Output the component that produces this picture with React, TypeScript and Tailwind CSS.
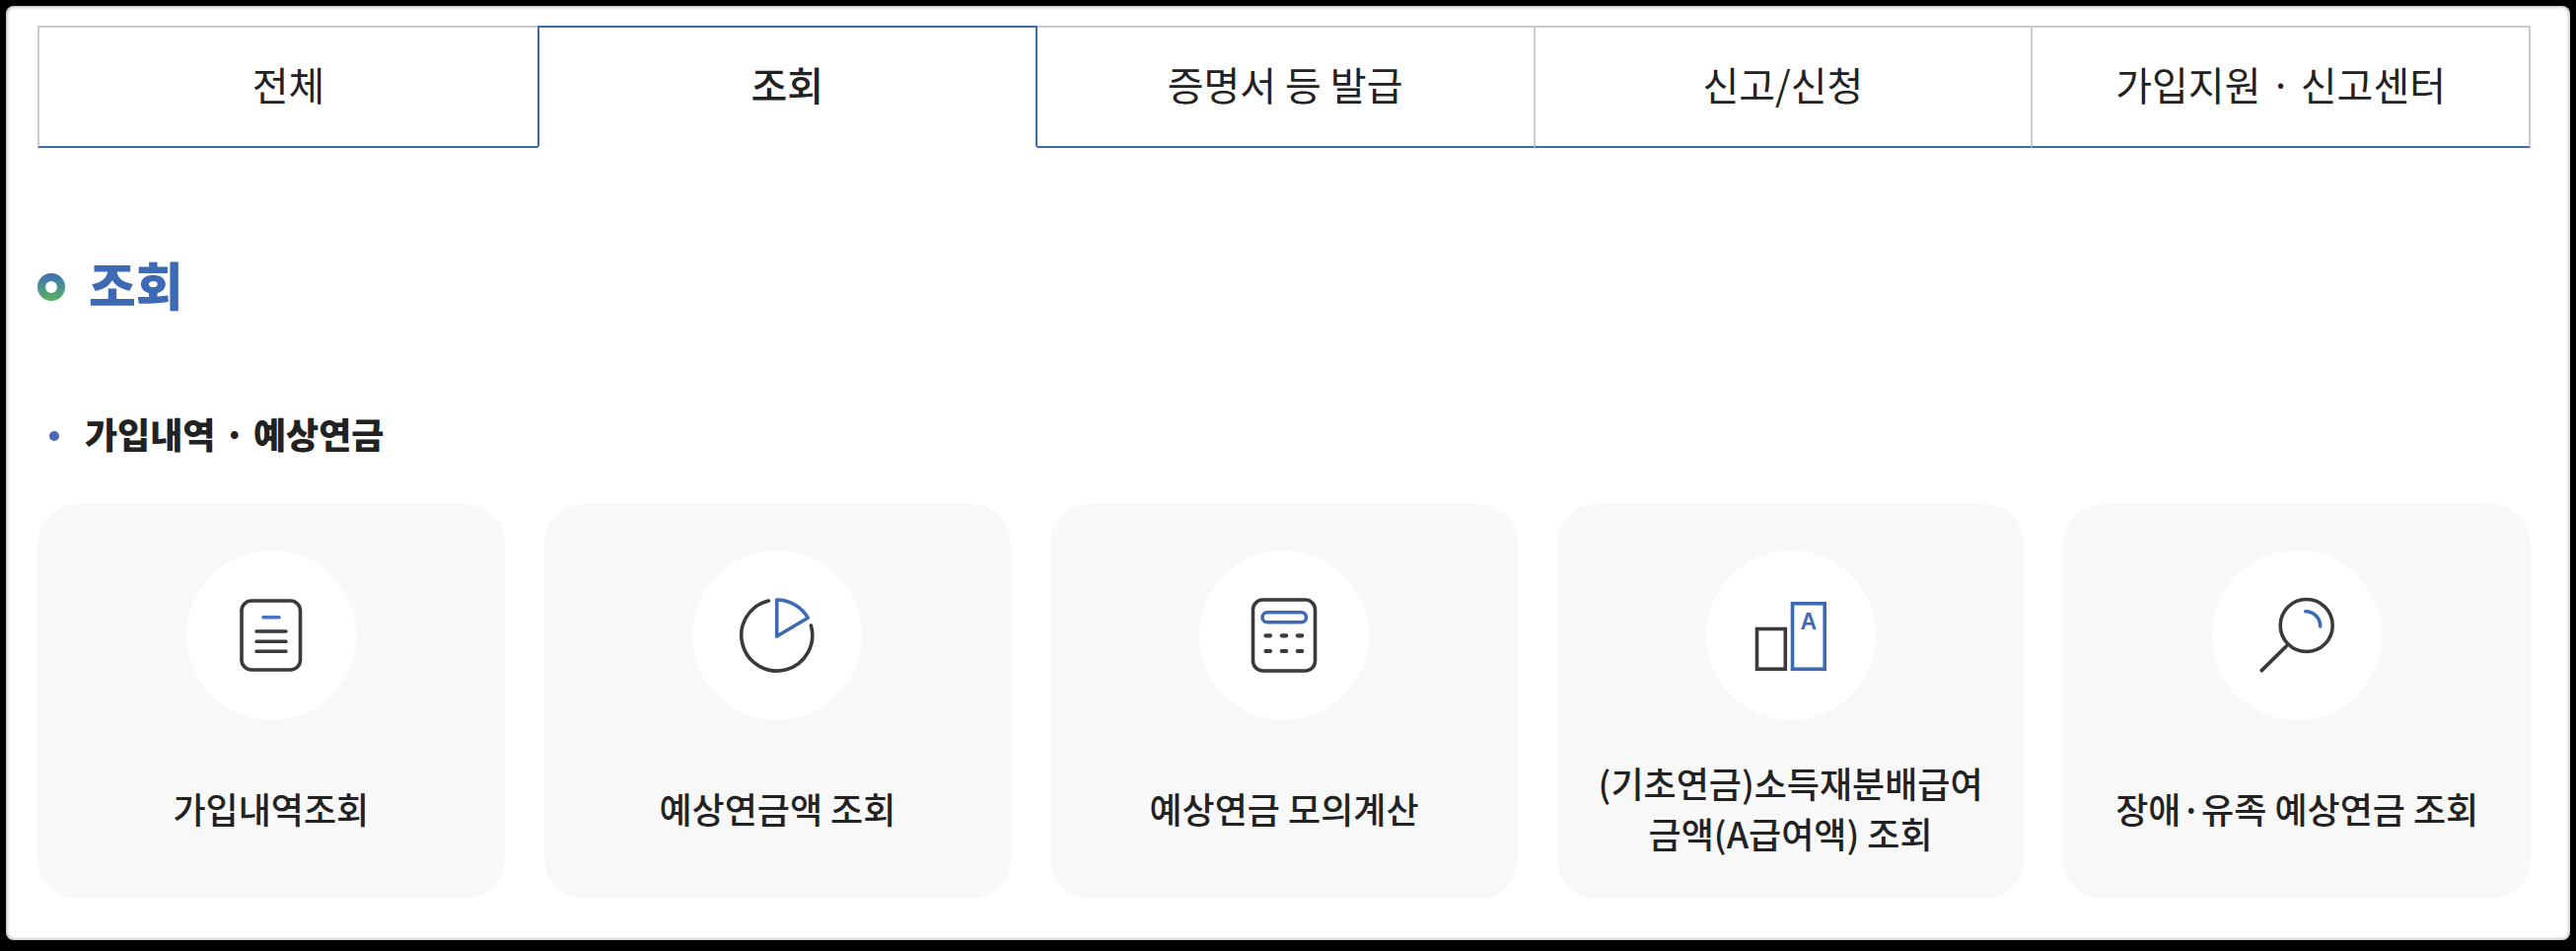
import React from "react";

const BLUE = "#3e6ab5";
const DARK = "#3a3a3a";

const tabs = ["전체", "조회", "증명서 등 발급", "신고/신청", "가입지원 · 신고센터"];

const DocIcon = () => (
  <svg viewBox="0 0 172 172" className="w-full h-full" fill="none" strokeLinecap="round">
    <rect x="56" y="51" width="59.5" height="70" rx="10" stroke={DARK} strokeWidth="3.6" />
    <path d="M78 67.7H94" stroke="#4a74c4" strokeWidth="3.6" />
    <path d="M71 82H101M71 92.3H101M71 102.3H101" stroke={DARK} strokeWidth="3.6" />
  </svg>
);

const PieIcon = () => (
  <svg viewBox="0 0 172 172" className="w-full h-full" fill="none" strokeLinecap="round" strokeLinejoin="round">
    <path d="M77.3 51A36 36 0 1 0 120.3 76" stroke={DARK} strokeWidth="3.6" />
    <path d="M85.7 87V50A37 37 0 0 1 117.3 68.3Z" stroke={BLUE} strokeWidth="3.6" />
  </svg>
);

const CalcIcon = () => (
  <svg viewBox="0 0 172 172" className="w-full h-full" fill="none" strokeLinecap="round">
    <rect x="54.5" y="50" width="63" height="72" rx="10" stroke={DARK} strokeWidth="3.6" />
    <rect x="64" y="62.7" width="44.5" height="10" rx="5" stroke={BLUE} strokeWidth="3.6" />
    <path d="M67.5 86.3H72M83.8 86.3H88.2M99.8 86.3H104.2M67.5 102H72M83.8 102H88.2M99.8 102H104.2" stroke={DARK} strokeWidth="4.2" />
  </svg>
);

const BarsIcon = () => (
  <svg viewBox="0 0 172 172" className="w-full h-full" fill="none">
    <rect x="51.5" y="79.5" width="28.8" height="40.7" stroke={DARK} strokeWidth="3.6" />
    <rect x="87.5" y="53.8" width="32.7" height="66.4" stroke={BLUE} strokeWidth="3.6" />
    <text x="103.8" y="80.3" textAnchor="middle" fontSize="23" fontWeight="700" fill={BLUE} fontFamily="'Liberation Sans', sans-serif">
      A
    </text>
  </svg>
);

const SearchIcon = () => (
  <svg viewBox="0 0 172 172" className="w-full h-full" fill="none" strokeLinecap="round">
    <circle cx="95.7" cy="76" r="26.5" stroke={DARK} strokeWidth="3.6" />
    <path d="M75.3 97L50.3 121.7" stroke={DARK} strokeWidth="3.8" />
    <path d="M94.7 61.7A15 15 0 0 1 109.7 77" stroke={BLUE} strokeWidth="3.6" />
  </svg>
);

const cards = [
  { label: "가입내역조회", icon: <DocIcon /> },
  { label: "예상연금액 조회", icon: <PieIcon /> },
  { label: "예상연금 모의계산", icon: <CalcIcon /> },
  { label: "(기초연금)소득재분배급여금액(A급여액) 조회", icon: <BarsIcon /> },
  { label: "장애·유족 예상연금 조회", icon: <SearchIcon /> },
];

const App: React.FC = () => {
  return (
    <div className="h-[964px] bg-black pt-[6px] px-[6px] pb-[11px] font-['Noto_Sans_CJK_KR','Noto_Sans',sans-serif] text-[#222222]">
      <div className="h-full bg-white rounded-lg pt-[20px] pl-[32px] pr-[40px] shadow-[inset_0_0_4px_#888888]">
        <div className="flex h-[124px]">
          {tabs.map((tab, i) => (
            <div
              key={tab}
              className={
                i === 1
                  ? "relative z-10 -ml-0.5 flex-1 flex items-center justify-center pb-[6px] border-2 border-[#3e6ab5] border-b-white text-[40px] font-medium"
                  : i === 0
                    ? "w-[509px] shrink-0 flex items-center justify-center pb-[6px] border-2 border-[#cccccc] border-b-[#3e6ab5] text-[40px]"
                    : "-ml-0.5 flex-1 flex items-center justify-center pb-[6px] border-2 border-[#cccccc] border-b-[#3e6ab5] text-[40px]"
              }
            >
              {tab}
            </div>
          ))}
        </div>

        <div className="mt-[106px] flex items-center gap-6 h-16">
          <span className="w-7 h-7 rounded-full bg-linear-to-b from-[#3e6ab5] to-[#5cb356] flex items-center justify-center mt-[6px]">
            <span className="w-3 h-3 rounded-full bg-white" />
          </span>
          <h2 className="text-[52px] font-black text-[#3e6ab5]">조회</h2>
        </div>

        <div className="mt-[95px] ml-3 flex items-center gap-[26px] h-12">
          <span className="w-2.5 h-2.5 rounded-full bg-[#4a66b8] mt-[6px]" />
          <h3 className="text-[36px] font-black">가입내역 · 예상연금</h3>
        </div>

        <div className="mt-[48px] grid grid-cols-5 gap-10">
          {cards.map((card) => (
            <div key={card.label} className="h-[400px] rounded-[40px] bg-[#f8f8f8] pt-[47px] px-10 flex flex-col items-center">
              <div className="w-[172px] h-[172px] shrink-0 rounded-full bg-white">{card.icon}</div>
              <div className="flex-1 flex items-center text-center text-[36px] font-medium leading-[51px] pb-[3px]">{card.label}</div>
            </div>
          ))}
        </div>
      </div>
    </div>
  );
};

export default App;
